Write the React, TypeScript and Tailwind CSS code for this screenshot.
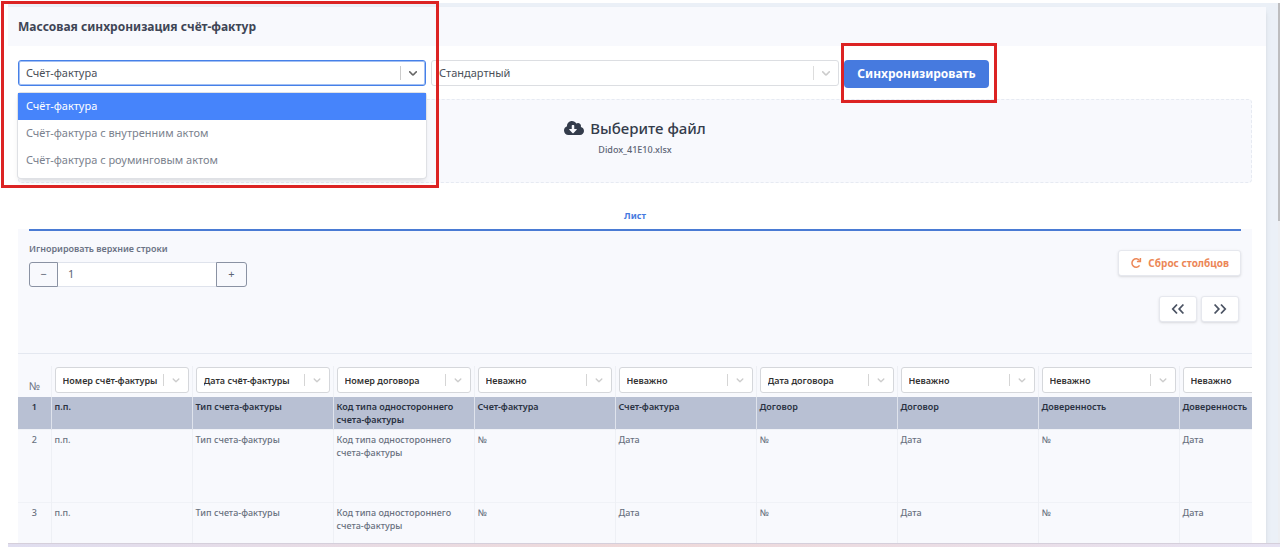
import React, { useState } from 'react';
import { FaCloudDownloadAlt } from 'react-icons/fa';

const docTypes = ['Счёт-фактура', 'Счёт-фактура с внутренним актом', 'Счёт-фактура с роуминговым актом'];

const columns = [
  'Номер счёт-фактуры',
  'Дата счёт-фактуры',
  'Номер договора',
  'Неважно',
  'Неважно',
  'Дата договора',
  'Неважно',
  'Неважно',
  'Неважно',
];

const subRow = ['п.п.', 'Тип счета-фактуры', 'Код типа одностороннего счета-фактуры', '№', 'Дата', '№', 'Дата', '№', 'Дата'];

const rows = [
  ['п.п.', 'Тип счета-фактуры', 'Код типа одностороннего счета-фактуры', 'Счет-фактура', 'Счет-фактура', 'Договор', 'Договор', 'Доверенность', 'Доверенность'],
  subRow,
  subRow,
];

const Chevron: React.FC<{ className: string }> = ({ className }) => (
  <svg viewBox="0 0 20 20" className={className} fill="currentColor" aria-hidden="true">
    <path d="M4.516 7.548c0.436-0.446 1.043-0.481 1.576 0l3.908 3.747 3.908-3.747c0.533-0.481 1.141-0.446 1.574 0 0.436 0.445 0.408 1.197 0 1.615-0.406 0.418-4.695 4.502-4.695 4.502-0.217 0.223-0.502 0.335-0.787 0.335s-0.57-0.112-0.789-0.335c0 0-4.287-4.084-4.695-4.502s-0.436-1.17 0-1.615z" />
  </svg>
);

interface SelectBoxProps {
  label: string;
  options: string[];
  value: string;
  onChange?: (value: string) => void;
  focused?: boolean;
}

const SelectBox: React.FC<SelectBoxProps> = ({ label, options, value, onChange, focused }) => (
  <div className={`flex h-[26px] items-center rounded-[3px] bg-white ${focused ? 'border border-[#4680e8] ring-1 ring-inset ring-[#4680e8]/50' : 'border border-[#dcdee2]'}`}>
    <select
      aria-label={label}
      value={value}
      onChange={e => onChange?.(e.target.value)}
      className="h-full min-w-0 flex-1 appearance-none bg-transparent px-[7px] text-[11px] text-[#4a4f58] outline-none"
    >
      {options.map(o => (
        <option key={o}>{o}</option>
      ))}
    </select>
    <span className={`h-3.5 w-px ${focused ? 'bg-[#cccccc]' : 'bg-[#dddddd]'}`} />
    <span className="flex w-6 justify-center">
      <Chevron className={focused ? 'size-3.5 text-[#666666]' : 'size-3.5 text-[#cccccc]'} />
    </span>
  </div>
);

const ColumnSelect: React.FC<{ index: number; name: string }> = ({ index, name }) => (
  <div className="flex h-[26px] items-center rounded-[3px] border border-[#d5d7db] bg-white">
    <select
      aria-label={`Столбец ${index + 1}`}
      defaultValue={name}
      className="h-full min-w-0 flex-1 appearance-none bg-transparent pl-[7px] text-[9px] font-semibold text-[#333333] outline-none"
    >
      {Array.from(new Set(columns)).map(c => (
        <option key={c}>{c}</option>
      ))}
    </select>
    <span className="h-3 w-px bg-[#d5d5d5]" />
    <span className="flex w-6 justify-center">
      <Chevron className="size-3 text-[#cccccc]" />
    </span>
  </div>
);

const Filters: React.FC = () => {
  const [docType, setDocType] = useState(docTypes[0]);

  return (
    <div className="grid grid-cols-3 gap-[5px]">
      <div className="relative">
        <SelectBox label="Тип документа" options={docTypes} value={docType} onChange={setDocType} focused />
        <ul role="listbox" className="absolute inset-x-0 top-[33px] z-10 rounded-[3px] bg-white pb-1 shadow-md ring-1 ring-[#dfe1e5]">
          {docTypes.map(type => (
            <li
              key={type}
              role="option"
              aria-selected={type === docType}
              onClick={() => setDocType(type)}
              className={`flex h-[27px] items-center px-2 text-[11px] ${type === docType ? 'bg-[#4684fb] text-white' : 'text-[#7b828e]'}`}
            >
              {type}
            </li>
          ))}
        </ul>
      </div>
      <SelectBox label="Шаблон" options={['Стандартный']} value="Стандартный" />
      <div className="relative">
        <button type="button" className="h-7 w-[145px] rounded bg-[#467adf] text-xs font-bold text-white">
          Синхронизировать
        </button>
        <div className="pointer-events-none absolute -top-[17px] -left-[3px] h-[60px] w-[156px] border-3 border-[#dc2323]" />
      </div>
    </div>
  );
};

const TopRowsInput: React.FC = () => {
  const [count, setCount] = useState(1);

  return (
    <div>
      <label htmlFor="top-rows" className="block text-[9px] leading-4 font-semibold text-[#6b7385]">
        Игнорировать верхние строки
      </label>
      <div className="mt-[5px] flex h-[25px] w-[218px] text-[11px] text-[#5c6475]">
        <button type="button" onClick={() => setCount(c => Math.max(0, c - 1))} className="w-[29px] rounded-l-[3px] border border-[#8a92a3]">
          −
        </button>
        <input
          id="top-rows"
          value={count}
          onChange={e => setCount(Number(e.target.value) || 0)}
          className="min-w-0 flex-1 border-y border-[#dfe3ec] bg-white px-2.5 outline-none"
        />
        <button type="button" onClick={() => setCount(c => c + 1)} className="w-[31px] rounded-r-[3px] border border-[#8a92a3]">
          +
        </button>
      </div>
    </div>
  );
};

const navButton = 'flex h-[26px] w-[38px] items-center justify-center rounded-[3px] border border-[#e6e8ee] bg-white text-[#4b5363] shadow-sm';

const SheetTable: React.FC = () => (
  <div className="overflow-hidden border-t border-[#e4e8f0] pt-3">
    <table className="w-[1302px] table-fixed border-collapse text-[9px] leading-[13px] font-medium text-[#69717f]">
      <colgroup>
        <col className="w-[33px]" />
        {columns.map((_, i) => (
          <col key={i} className="w-[141px]" />
        ))}
      </colgroup>
      <thead>
        <tr className="h-[31px]">
          <th scope="col" className="pt-2 text-[11px] font-normal">№</th>
          {columns.map((name, i) => (
            <th key={i} scope="col" className="border-l border-[#eef0f5] px-[3px] pt-px pb-1 text-left">
              <ColumnSelect index={i} name={name} />
            </th>
          ))}
        </tr>
      </thead>
      <tbody>
        {rows.map((row, r) => (
          <tr key={r} className={r === 0 ? 'h-8 bg-[#b8c0d3] font-semibold text-[#2a3242]' : 'h-[73px] border-t border-[#f0f2f7]'}>
            <td className="pt-[3px] text-center align-top">{r + 1}</td>
            {row.map((cell, i) => (
              <td key={i} className={`border-l px-[3px] pt-[3px] align-top ${r === 0 ? 'border-[#dfe3ec]' : 'border-[#eef0f5]'}`}>
                {cell}
              </td>
            ))}
          </tr>
        ))}
      </tbody>
    </table>
  </div>
);

export default function App() {
  return (
    <div className="relative flex h-screen flex-col overflow-hidden bg-white font-['Noto_Sans',sans-serif]">
      <div className="mt-[3px] flex min-h-0 flex-1">
        <div className="ml-2 min-w-0 flex-1 overflow-hidden bg-[#ebf0f7] pt-1 pr-3">
          <main className="min-h-full rounded-tr bg-white shadow-md">
            <header className="flex h-[39px] items-center bg-[#f8f9fd] px-2.5">
              <h1 className="text-xs font-bold text-[#3f4656]">Массовая синхронизация счёт-фактур</h1>
            </header>
            <div className="pt-3.5 pr-3.5 pl-2.5">
              <Filters />
              <section className="mt-[11px] flex h-[84px] flex-col items-center rounded border border-dashed border-[#e6eaf2] bg-[#f8f9fd] pt-4">
                <label htmlFor="file" className="flex h-6 items-center gap-1.5 text-[15px] font-medium text-[#343c4b]">
                  <FaCloudDownloadAlt className="size-5" />
                  Выберите файл
                </label>
                <input id="file" type="file" className="sr-only" />
                <p className="mt-0.5 text-[9px] leading-4 font-medium text-[#5c6475]">Didox_41E10.xlsx</p>
              </section>
              <nav className="relative mt-[25px] px-[11px]">
                <a href="#sheet" className="block border-b-2 border-[#4a7bd4] pb-1.5 text-center text-[9px] leading-[15px] font-bold text-[#467adf]">
                  Лист
                </a>
              </nav>
              <section id="sheet" className="-mt-0.5 bg-[#f8f9fd]">
                <div className="flex h-[124px] items-start justify-between px-[11px] pt-3">
                  <TopRowsInput />
                  <div className="flex flex-col items-end pt-[9px]">
                    <button type="button" className="flex h-[26px] items-center gap-1.5 rounded-[3px] border border-[#e6e8ee] bg-white px-[11px] text-[10px] font-bold text-[#ec8757] shadow-sm">
                      <svg viewBox="0 0 12 12" className="size-3" fill="none" stroke="currentColor" strokeWidth="1.5" aria-hidden="true">
                        <path d="M9.6 8.4A4.2 4.2 0 1 1 9.6 3.6" />
                        <path d="M10.4 1v3.5H6.9" />
                      </svg>
                      Сброс столбцов
                    </button>
                    <div className="mt-5 mr-0.5 flex gap-1">
                      <button type="button" aria-label="Назад" className={navButton}>
                        <svg viewBox="0 0 14 12" className="h-3 w-3.5" fill="none" stroke="currentColor" strokeWidth="1.8" aria-hidden="true">
                          <path d="M6 1.5 1.8 6 6 10.5M12.4 1.5 8.2 6l4.2 4.5" />
                        </svg>
                      </button>
                      <button type="button" aria-label="Вперёд" className={navButton}>
                        <svg viewBox="0 0 14 12" className="h-3 w-3.5" fill="none" stroke="currentColor" strokeWidth="1.8" aria-hidden="true">
                          <path d="M1.6 1.5 5.8 6l-4.2 4.5M8 1.5 12.2 6 8 10.5" />
                        </svg>
                      </button>
                    </div>
                  </div>
                </div>
                <SheetTable />
              </section>
            </div>
          </main>
        </div>
        <div className="w-0.5 bg-[#eceef2]">
          <div className="h-[218px] bg-[#bdbdbf]" />
        </div>
      </div>
      <footer className="ml-2 h-1 shrink-0 border-t border-[#d5cfdb] bg-linear-to-r from-[#e0def0] via-[#efd9d9] to-[#e6e2f2]" />
      <div className="pointer-events-none absolute top-px left-px z-20 h-[187px] w-[438px] border-3 border-[#dc2323]" />
    </div>
  );
}
